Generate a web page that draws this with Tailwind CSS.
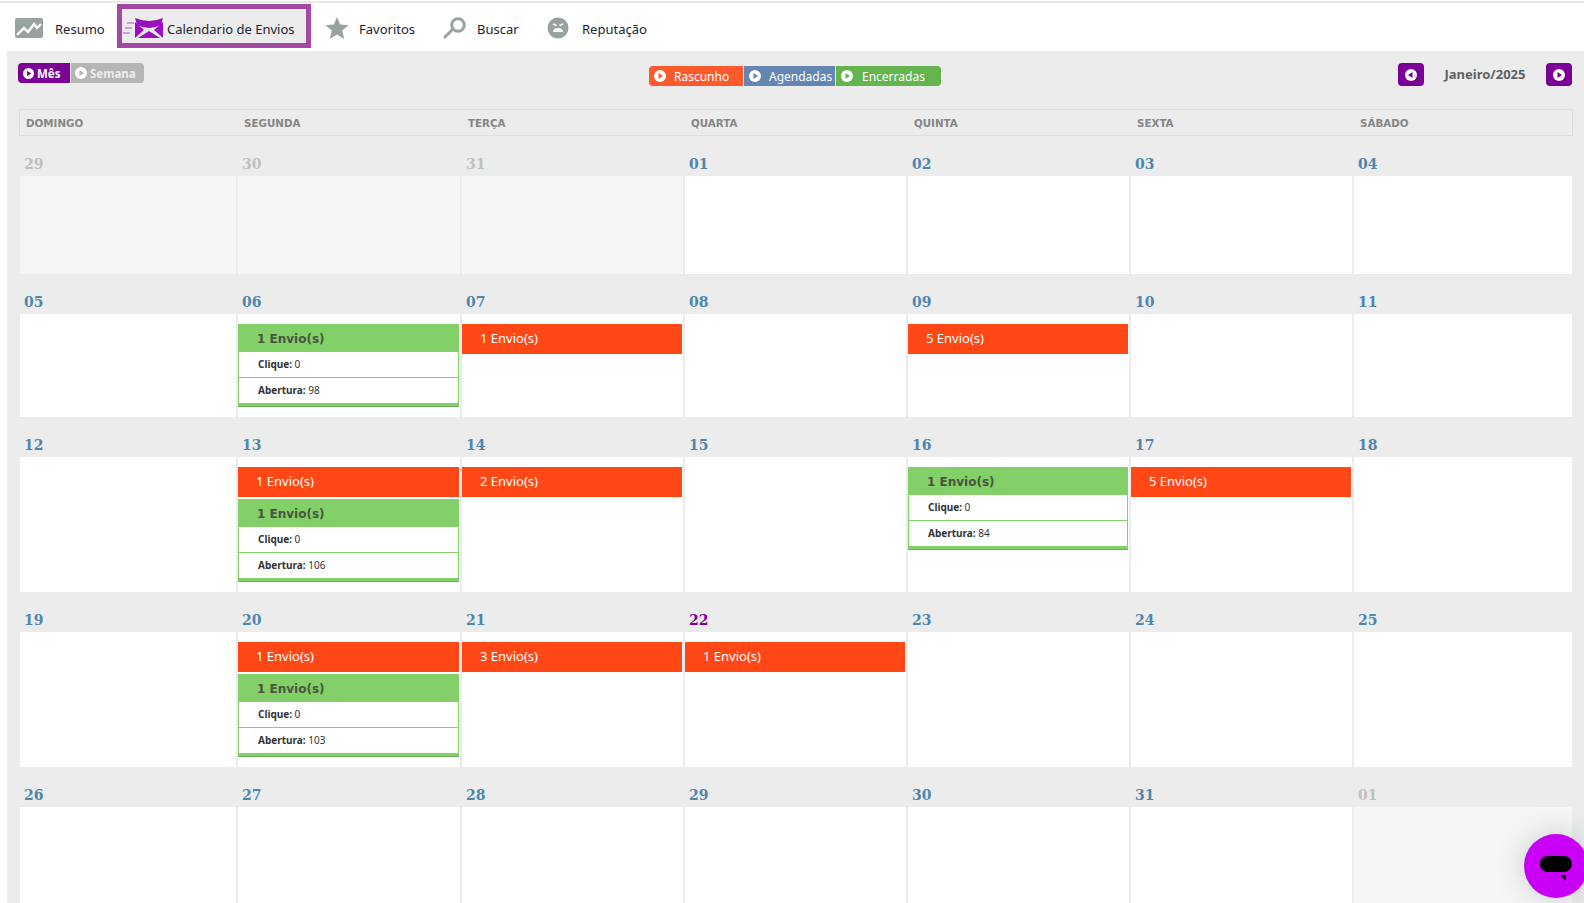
<!DOCTYPE html>
<html><head><meta charset="utf-8"><script src="https://cdn.jsdelivr.net/npm/@tailwindcss/browser@4"></script></head>
<body class="bg-white overflow-hidden h-[903px] font-['Noto_Sans',sans-serif]">
<div class="h-[3px] bg-white border-b-2 border-[#e8e8e8]"></div>
<nav class="h-[48px] pt-[2px] flex items-center text-[13px] text-[#1c2430]">
  <a class="ml-[15px] flex items-center w-[102px]"><svg class="w-[28px] h-[20px] shrink-0" viewBox="0 0 28 20"><rect width="28" height="20" rx="2" fill="#98a2a0"/><path d="M2 17 L9 10 L13 14 L19 6 L22 10 L26 6" fill="none" stroke="#fff" stroke-width="2.4"/></svg><span class="ml-[12px] mt-[3px]">Resumo</span></a>
  <a class="w-[194px] h-[44px] -mt-[4px] pt-[4px] border-[5px] border-[#a349a4] bg-[#ececec] flex items-center"><svg class="w-[40px] h-[20px] ml-[1px] shrink-0" viewBox="0 0 40 20"><path d="M4 5h7M2 10h7M0 15h7" stroke="#c77fe0" stroke-width="1.6"/><path d="M12 0 Q26 6 40 0 L38 7 Q26 13 14 7 Z" fill="#9a10c0"/><path d="M12 4 L21 12 L12 20 Z M40 4 L31 12 L40 20 Z M15 20 L26 13 L37 20 Z" fill="#9a10c0"/></svg><span class="ml-[4px] mt-[3px] whitespace-nowrap">Calendario de Envios</span></a>
  <a class="ml-[14px] flex items-center w-[118px]"><svg class="w-[24px] h-[24px] shrink-0" viewBox="0 0 24 24"><path d="M12 1 L15.2 8.6 L23.5 9.3 L17.2 14.6 L19.2 23 L12 18.6 L4.8 23 L6.8 14.6 L.5 9.3 L8.8 8.6 Z" fill="#98a2a0"/></svg><span class="ml-[10px] mt-[3px]">Favoritos</span></a>
  <a class="flex items-center w-[104px]"><svg class="w-[24px] h-[22px] shrink-0" viewBox="0 0 24 22"><circle cx="15" cy="8" r="6.3" fill="none" stroke="#98a2a0" stroke-width="3"/><path d="M9 13 L2 20" stroke="#98a2a0" stroke-width="3" stroke-linecap="round"/></svg><span class="ml-[10px] mt-[3px]">Buscar</span></a>
  <a class="flex items-center"><svg class="w-[22px] h-[22px] shrink-0" viewBox="0 0 22 22"><circle cx="11" cy="11" r="10.5" fill="#98a2a0"/><path d="M6 7 L9.5 8.5 M16 7 L12.5 8.5" stroke="#fff" stroke-width="1.6"/><path d="M6 15 Q6 11 11 11 Q16 11 16 15 Z" fill="#fff"/></svg><span class="ml-[13px] mt-[3px]">Reputação</span></a>
</nav>
<main class="ml-[7px] h-[852px] bg-[#ececec] pl-[12px] pr-[10px] relative">
  <div class="h-[58px] relative">
    <div class="absolute -left-[1px] top-[12px] flex text-[11.5px] font-bold text-white h-[20px] leading-[19px]">
      <span class="w-[52px] bg-[#7a0096] rounded-l-[4px] flex items-center pl-[5px] gap-[3px]"><svg class="w-[11px] h-[11px] shrink-0" viewBox="0 0 12 12"><circle cx="6" cy="6" r="6" fill="#fff"/><path d="M4.5 3 L9 6 L4.5 9Z" fill="#7a0096"/></svg>Mês</span>
      <span class="w-[73px] ml-[1px] bg-[#b5b5b5] rounded-r-[4px] flex items-center pl-[4px] gap-[3px] text-[#ededed]"><svg class="w-[12px] h-[12px] shrink-0" viewBox="0 0 12 12"><circle cx="6" cy="6" r="6" fill="#fff"/><path d="M4.5 3 L9 6 L4.5 9Z" fill="#b5b5b5"/></svg>Semana</span>
    </div>
    <div class="absolute left-[630px] top-[15px] flex text-[12px] text-white h-[20px] leading-[19px]">
      <span class="w-[94px] bg-[#ff5a2c] rounded-l-[4px] flex items-center pl-[5px] gap-[8px]"><svg class="w-[12px] h-[12px] shrink-0" viewBox="0 0 12 12"><circle cx="6" cy="6" r="6" fill="#fff"/><path d="M4.5 3 L9 6 L4.5 9Z" fill="#ff5a2c"/></svg>Rascunho</span>
      <span class="w-[91px] ml-[1px] bg-[#6585b3] flex items-center pl-[5px] gap-[8px]"><svg class="w-[12px] h-[12px] shrink-0" viewBox="0 0 12 12"><circle cx="6" cy="6" r="6" fill="#fff"/><path d="M4.5 3 L9 6 L4.5 9Z" fill="#6585b3"/></svg>Agendadas</span>
      <span class="w-[105px] ml-[1px] bg-[#64b54e] rounded-r-[4px] flex items-center pl-[5px] gap-[9px]"><svg class="w-[12px] h-[12px] shrink-0" viewBox="0 0 12 12"><circle cx="6" cy="6" r="6" fill="#fff"/><path d="M4.5 3 L9 6 L4.5 9Z" fill="#64b54e"/></svg>Encerradas</span>
    </div>
    <div class="absolute left-[1379px] top-[12px] w-[174px] h-[23px] flex items-center justify-between text-[13px] font-bold text-[#5f6063]">
      <span class="w-[26px] h-[23px] rounded-[4px] bg-[#7a0096] flex items-center justify-center"><svg class="w-[12px] h-[12px]" viewBox="0 0 12 12"><circle cx="6" cy="6" r="6" fill="#fff"/><path d="M7.5 3 L3 6 L7.5 9Z" fill="#7a0096"/></svg></span>
      <span>Janeiro/2025</span>
      <span class="w-[26px] h-[23px] rounded-[4px] bg-[#7a0096] flex items-center justify-center"><svg class="w-[12px] h-[12px]" viewBox="0 0 12 12"><circle cx="6" cy="6" r="6" fill="#fff"/><path d="M4.5 3 L9 6 L4.5 9Z" fill="#7a0096"/></svg></span>
    </div>
  </div>
  <div class="w-[1554px] h-[27px] pt-[3px] border-x border-y border-[#dedede] grid grid-cols-[218px_224px_223px_223px_223px_223px_1fr] items-center text-[10.3px] font-bold text-[#858585] font-['DejaVu_Sans',sans-serif]">
    <span class="pl-[6px]">DOMINGO</span><span class="pl-[6px]">SEGUNDA</span><span class="pl-[6px]">TERÇA</span><span class="pl-[6px]">QUARTA</span><span class="pl-[6px]">QUINTA</span><span class="pl-[6px]">SEXTA</span><span class="pl-[6px]">SÁBADO</span>
  </div>
  <div class="grid grid-cols-[216px_222px_221px_221px_221px_221px_218px] gap-x-[2px] ml-[1px] mt-[13px] text-[14px] leading-[31px] font-bold font-['DejaVu_Serif',serif] text-[#4f86ad]">
    <!-- row 1 -->
    <div class="col-start-1 h-[27px] pl-[4px] text-[#c0c0c0]">29</div><div class="h-[27px] pl-[4px] text-[#c0c0c0]">30</div><div class="h-[27px] pl-[4px] text-[#c0c0c0]">31</div><div class="h-[27px] pl-[4px]">01</div><div class="h-[27px] pl-[4px]">02</div><div class="h-[27px] pl-[4px]">03</div><div class="h-[27px] pl-[4px]">04</div>
    <div class="h-[98px] bg-[#f6f6f6]"></div><div class="h-[98px] bg-[#f6f6f6]"></div><div class="h-[98px] bg-[#f6f6f6]"></div><div class="h-[98px] bg-white"></div><div class="h-[98px] bg-white"></div><div class="h-[98px] bg-white"></div><div class="h-[98px] bg-white"></div>
    <!-- row 2 -->
    <div class="mt-[13px] h-[27px] pl-[4px]">05</div><div class="mt-[13px] h-[27px] pl-[4px]">06</div><div class="mt-[13px] h-[27px] pl-[4px]">07</div><div class="mt-[13px] h-[27px] pl-[4px]">08</div><div class="mt-[13px] h-[27px] pl-[4px]">09</div><div class="mt-[13px] h-[27px] pl-[4px]">10</div><div class="mt-[13px] h-[27px] pl-[4px]">11</div>
    <div class="h-[103px] bg-white"></div>
    <div class="h-[103px] bg-white pt-[10px]">
      <div class="w-[221px] font-['Noto_Sans',sans-serif] font-normal text-[#333]">
        <div class="h-[28px] bg-[#83cf68] pl-[19px] text-[12px] font-bold leading-[30px] text-[#48553f] font-['DejaVu_Sans',sans-serif]">1 Envio(s)</div>
        <div class="h-[25px] border-x border-[#83cf68] pl-[19px] text-[10px] leading-[25px]"><b>Clique:</b> 0</div>
        <div class="h-[26px] border-x border-t border-[#83cf68] pl-[19px] text-[10px] leading-[25px]"><b>Abertura:</b> 98</div>
        <div class="h-[4px] bg-[#83cf68] border-b border-[#6eae58]"></div>
      </div>
    </div>
    <div class="h-[103px] bg-white pt-[10px]"><div class="w-[220px] h-[30px] bg-[#ff4816] pl-[18px] text-[13px] font-normal leading-[28px] text-white font-['Noto_Sans',sans-serif]">1 Envio(s)</div></div>
    <div class="h-[103px] bg-white"></div>
    <div class="h-[103px] bg-white pt-[10px]"><div class="w-[220px] h-[30px] bg-[#ff4816] pl-[18px] text-[13px] font-normal leading-[28px] text-white font-['Noto_Sans',sans-serif]">5 Envio(s)</div></div>
    <div class="h-[103px] bg-white"></div><div class="h-[103px] bg-white"></div>
    <!-- row 3 -->
    <div class="mt-[13px] h-[27px] pl-[4px]">12</div><div class="mt-[13px] h-[27px] pl-[4px]">13</div><div class="mt-[13px] h-[27px] pl-[4px]">14</div><div class="mt-[13px] h-[27px] pl-[4px]">15</div><div class="mt-[13px] h-[27px] pl-[4px]">16</div><div class="mt-[13px] h-[27px] pl-[4px]">17</div><div class="mt-[13px] h-[27px] pl-[4px]">18</div>
    <div class="h-[135px] bg-white"></div>
    <div class="h-[135px] bg-white pt-[10px]">
      <div class="w-[221px] h-[30px] bg-[#ff4816] pl-[18px] text-[13px] font-normal leading-[28px] text-white font-['Noto_Sans',sans-serif]">1 Envio(s)</div>
      <div class="w-[221px] mt-[2px] font-['Noto_Sans',sans-serif] font-normal text-[#333]">
        <div class="h-[28px] bg-[#83cf68] pl-[19px] text-[12px] font-bold leading-[30px] text-[#48553f] font-['DejaVu_Sans',sans-serif]">1 Envio(s)</div>
        <div class="h-[25px] border-x border-[#83cf68] pl-[19px] text-[10px] leading-[25px]"><b>Clique:</b> 0</div>
        <div class="h-[26px] border-x border-t border-[#83cf68] pl-[19px] text-[10px] leading-[25px]"><b>Abertura:</b> 106</div>
        <div class="h-[4px] bg-[#83cf68] border-b border-[#6eae58]"></div>
      </div>
    </div>
    <div class="h-[135px] bg-white pt-[10px]"><div class="w-[220px] h-[30px] bg-[#ff4816] pl-[18px] text-[13px] font-normal leading-[28px] text-white font-['Noto_Sans',sans-serif]">2 Envio(s)</div></div>
    <div class="h-[135px] bg-white"></div>
    <div class="h-[135px] bg-white pt-[10px]">
      <div class="w-[220px] font-['Noto_Sans',sans-serif] font-normal text-[#333]">
        <div class="h-[28px] bg-[#83cf68] pl-[19px] text-[12px] font-bold leading-[30px] text-[#48553f] font-['DejaVu_Sans',sans-serif]">1 Envio(s)</div>
        <div class="h-[25px] border-x border-[#83cf68] pl-[19px] text-[10px] leading-[25px]"><b>Clique:</b> 0</div>
        <div class="h-[26px] border-x border-t border-[#83cf68] pl-[19px] text-[10px] leading-[25px]"><b>Abertura:</b> 84</div>
        <div class="h-[4px] bg-[#83cf68] border-b border-[#6eae58]"></div>
      </div>
    </div>
    <div class="h-[135px] bg-white pt-[10px]"><div class="w-[220px] h-[30px] bg-[#ff4816] pl-[18px] text-[13px] font-normal leading-[28px] text-white font-['Noto_Sans',sans-serif]">5 Envio(s)</div></div>
    <div class="h-[135px] bg-white"></div>
    <!-- row 4 -->
    <div class="mt-[13px] h-[27px] pl-[4px]">19</div><div class="mt-[13px] h-[27px] pl-[4px]">20</div><div class="mt-[13px] h-[27px] pl-[4px]">21</div><div class="mt-[13px] h-[27px] pl-[4px] text-[#7a0096]">22</div><div class="mt-[13px] h-[27px] pl-[4px]">23</div><div class="mt-[13px] h-[27px] pl-[4px]">24</div><div class="mt-[13px] h-[27px] pl-[4px]">25</div>
    <div class="h-[135px] bg-white"></div>
    <div class="h-[135px] bg-white pt-[10px]">
      <div class="w-[221px] h-[30px] bg-[#ff4816] pl-[18px] text-[13px] font-normal leading-[28px] text-white font-['Noto_Sans',sans-serif]">1 Envio(s)</div>
      <div class="w-[221px] mt-[2px] font-['Noto_Sans',sans-serif] font-normal text-[#333]">
        <div class="h-[28px] bg-[#83cf68] pl-[19px] text-[12px] font-bold leading-[30px] text-[#48553f] font-['DejaVu_Sans',sans-serif]">1 Envio(s)</div>
        <div class="h-[25px] border-x border-[#83cf68] pl-[19px] text-[10px] leading-[25px]"><b>Clique:</b> 0</div>
        <div class="h-[26px] border-x border-t border-[#83cf68] pl-[19px] text-[10px] leading-[25px]"><b>Abertura:</b> 103</div>
        <div class="h-[4px] bg-[#83cf68] border-b border-[#6eae58]"></div>
      </div>
    </div>
    <div class="h-[135px] bg-white pt-[10px]"><div class="w-[220px] h-[30px] bg-[#ff4816] pl-[18px] text-[13px] font-normal leading-[28px] text-white font-['Noto_Sans',sans-serif]">3 Envio(s)</div></div>
    <div class="h-[135px] bg-white pt-[10px]"><div class="w-[220px] h-[30px] bg-[#ff4816] pl-[18px] text-[13px] font-normal leading-[28px] text-white font-['Noto_Sans',sans-serif]">1 Envio(s)</div></div>
    <div class="h-[135px] bg-white"></div><div class="h-[135px] bg-white"></div><div class="h-[135px] bg-white"></div>
    <!-- row 5 -->
    <div class="mt-[13px] h-[27px] pl-[4px]">26</div><div class="mt-[13px] h-[27px] pl-[4px]">27</div><div class="mt-[13px] h-[27px] pl-[4px]">28</div><div class="mt-[13px] h-[27px] pl-[4px]">29</div><div class="mt-[13px] h-[27px] pl-[4px]">30</div><div class="mt-[13px] h-[27px] pl-[4px]">31</div><div class="mt-[13px] h-[27px] pl-[4px] text-[#c0c0c0]">01</div>
    <div class="h-[97px] bg-white"></div><div class="h-[97px] bg-white"></div><div class="h-[97px] bg-white"></div><div class="h-[97px] bg-white"></div><div class="h-[97px] bg-white"></div><div class="h-[97px] bg-white"></div><div class="h-[97px] bg-[#f6f6f6]"></div>
  </div>
</main>
<div class="fixed left-[1524px] top-[834px] w-[64px] h-[64px] rounded-full bg-[#c800f5] shadow-[0_0_30px_rgba(60,90,90,0.25)] overflow-visible">
  <div class="absolute left-[16px] top-[22px] w-[32px] h-[16px] rounded-full bg-black"></div>
  <svg class="absolute left-[36px] top-[41px] w-[6px] h-[6px]" viewBox="0 0 6 6"><path d="M0 0H6V6Z" fill="#000"/></svg>
</div>
</body></html>
